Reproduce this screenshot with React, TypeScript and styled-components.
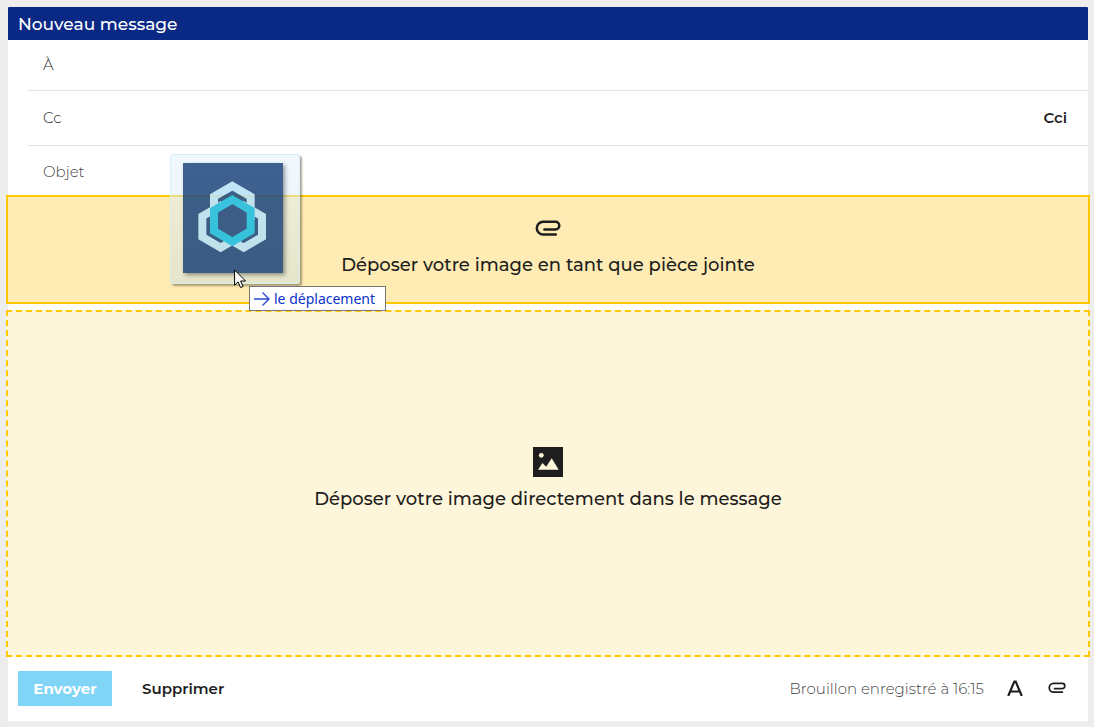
import React from "react";
import styled, { createGlobalStyle } from "styled-components";

const GlobalStyle = createGlobalStyle`
  *, *::before, *::after { box-sizing: border-box; }
  body {
    margin: 0;
    background: #ededed;
    color: #1e1e1e;
    font-family: Montserrat, Inter, "Liberation Sans", sans-serif;
    font-size: 15px;
  }
`;

const Page = styled.main`
  position: relative;
  display: flex;
  min-height: 100vh;
  padding: 7px 6px 6px 8px;
`;

const Composer = styled.form`
  flex: 1;
  min-width: 0;
  display: flex;
  flex-direction: column;
  background: #fff;
  border-radius: 1px 1px 0 0;
`;

const Title = styled.h1`
  margin: 0;
  padding: 2px 10px 0;
  background: #0a2985;
  border-radius: 1px 1px 0 0;
  color: #fff;
  font-size: 17px;
  font-weight: 500;
  line-height: 31px;
`;

const Field = styled.div<{ $height: number; $last?: boolean }>`
  display: flex;
  align-items: center;
  height: ${(p) => p.$height}px;
  margin-left: 20px;
  padding: ${(p) => (p.$last ? "2px 21px 0 15px" : "0 21px 2px 15px")};
  border-bottom: ${(p) => (p.$last ? "none" : "1px solid #e2e2e2")};
`;

const FieldLabel = styled.label<{ $muted?: boolean }>`
  color: ${(p) => (p.$muted ? "#444" : "#1e1e1e")};
  font-weight: 300;
`;

const FieldInput = styled.input`
  flex: 1;
  min-width: 0;
  margin-left: 12px;
  border: 0;
  outline: 0;
  background: transparent;
  font: inherit;
`;

const TextButton = styled.button`
  padding: 0;
  border: 0;
  background: none;
  color: #1e1e1e;
  font: inherit;
  font-weight: 600;
  cursor: pointer;
`;

const DropZone = styled.section<{ $active?: boolean }>`
  display: flex;
  flex-direction: column;
  align-items: center;
  justify-content: center;
  flex: ${(p) => (p.$active ? "0 0 109px" : "1 0 200px")};
  gap: ${(p) => (p.$active ? 16 : 10)}px;
  margin: 0 -2px ${(p) => (p.$active ? 6 : 0)}px;
  padding-bottom: ${(p) => (p.$active ? 2 : 10)}px;
  border: 2px ${(p) => (p.$active ? "solid" : "dashed")} #ffc800;
  background: ${(p) => (p.$active ? "#feecb4" : "#fef6da")};
  svg { display: block; }
`;

const DropText = styled.p`
  margin: 0;
  font-size: 18px;
  font-weight: 500;
  line-height: 24px;
`;

const Footer = styled.footer`
  display: flex;
  align-items: center;
  height: 64px;
  padding: 0 22px 2px 10px;
`;

const SendButton = styled.button`
  height: 35px;
  width: 94px;
  margin-right: 30px;
  padding: 0;
  border: 0;
  border-radius: 1px;
  background: #80d4f6;
  color: #fff;
  font: inherit;
  font-weight: 700;
`;

const DraftStatus = styled.span`
  margin-left: auto;
  color: #444;
  font-weight: 300;
`;

const IconButton = styled.button<{ $gap: number }>`
  display: flex;
  margin-left: ${(p) => p.$gap}px;
  padding: 0;
  border: 0;
  background: none;
`;

const DragGhost = styled.div`
  position: absolute;
  top: 154px;
  left: 170px;
  width: 130px;
  height: 130px;
  padding: 8px 12px;
  border: 1px solid rgba(205, 240, 252, 0.7);
  border-radius: 3px;
  background: linear-gradient(rgba(226, 243, 255, 0.5), rgba(204, 222, 226, 0.5));
  box-shadow: 2px 2px 2px rgba(70, 60, 30, 0.45);
`;

const Thumbnail = styled.svg`
  display: block;
  opacity: 0.76;
  filter: drop-shadow(2px 2px 2px rgba(0, 0, 0, 0.5));
`;

const DragHint = styled.div`
  position: absolute;
  top: 286px;
  left: 249px;
  display: flex;
  align-items: center;
  gap: 4px;
  height: 25px;
  width: 137px;
  padding-left: 4px;
  border: 1px solid #767676;
  background: #fff;
  color: #0a32c8;
  font-family: "Noto Sans", "Open Sans", sans-serif;
  font-size: 14px;
  white-space: nowrap;
`;

const Pointer = styled.svg`
  position: absolute;
  top: 269px;
  left: 234px;
`;

const Clip = ({ width, height }: { width: number; height: number }) => (
  <svg width={width} height={height} viewBox="0 0 26 17" fill="none" stroke="#1e1e1e" strokeWidth="2.5" strokeLinecap="round" aria-hidden="true">
    <path d="M20.8 14.6H8.2a6.4 6.4 0 0 1 0-12.8h12.3a3.8 3.8 0 0 1 0 7.6H9.4" />
  </svg>
);

const Hexagon = ({ x, y, color, fill = "none" }: { x: number; y: number; color: string; fill?: string }) => (
  <path
    transform={`translate(${x} ${y})`}
    d="M0-63 55-31V31L0 63-55 31V-31Z"
    fill={fill}
    stroke={color}
    strokeWidth="24"
  />
);

export default function App() {
  return (
    <>
      <GlobalStyle />
      <Page>
        <Composer onSubmit={(e) => e.preventDefault()}>
          <Title>Nouveau message</Title>
          <Field $height={51}>
            <FieldLabel htmlFor="to">À</FieldLabel>
            <FieldInput id="to" />
          </Field>
          <Field $height={55}>
            <FieldLabel htmlFor="cc">Cc</FieldLabel>
            <FieldInput id="cc" />
            <TextButton type="button">Cci</TextButton>
          </Field>
          <Field $height={49} $last>
            <FieldLabel htmlFor="subject" $muted>Objet</FieldLabel>
            <FieldInput id="subject" />
          </Field>
          <DropZone $active>
            <Clip width={26} height={17} />
            <DropText>Déposer votre image en tant que pièce jointe</DropText>
          </DropZone>
          <DropZone>
            <svg width="30" height="30" viewBox="0 0 30 30" aria-hidden="true">
              <path fill="#1e1e1e" d="M0 0h30v30H0z" />
              <circle cx="8.3" cy="8.3" r="2.4" fill="#fef6da" />
              <path fill="#fef6da" d="M5 22.7 9.4 16l3.8 3.7 5.5-8.5 7 11.5z" />
            </svg>
            <DropText>Déposer votre image directement dans le message</DropText>
          </DropZone>
          <Footer>
            <SendButton type="submit">Envoyer</SendButton>
            <TextButton type="button">Supprimer</TextButton>
            <DraftStatus>Brouillon enregistré à 16:15</DraftStatus>
            <IconButton type="button" $gap={23} aria-label="Mise en forme">
              <svg width="16" height="16" viewBox="0 0 16 16" fill="none" stroke="#1e1e1e" strokeWidth="2.2" aria-hidden="true">
                <path d="M1.2 16 7.3 1.600h1.400l6.100 14.400M3.400 11.500h9.200" />
              </svg>
            </IconButton>
            <IconButton type="button" $gap={25} aria-label="Joindre un fichier">
              <Clip width={18} height={12} />
            </IconButton>
          </Footer>
        </Composer>

        <DragGhost>
          <Thumbnail width="100" height="110" viewBox="69 54 300 330" aria-hidden="true">
            <path d="M69 54h300v330H69z" fill="#06326e" />
            <Hexagon x={217} y={186} color="#b4e0f5" />
            <Hexagon x={182} y={245} color="#b4e0f5" />
            <Hexagon x={251} y={245} color="#b4e0f5" />
            <Hexagon x={217} y={227} color="#00b6e0" fill="#06326e" />
          </Thumbnail>
        </DragGhost>
        <DragHint>
          <svg width="16" height="14" viewBox="0 0 16 14" fill="none" stroke="#2a4bd0" strokeWidth="1.4" aria-hidden="true">
            <path d="M0 7h15M8.5.5 15 7l-6.500 6.500" />
          </svg>
          le déplacement
        </DragHint>
        <Pointer width="13" height="20" viewBox="0 0 13 20" aria-hidden="true">
          <path d="M.6 1v15.200l3.500-3.400 2.400 5.700 2.500-1-2.400-5.500h4.900z" fill="#fff" stroke="#000" />
        </Pointer>
      </Page>
    </>
  );
}
